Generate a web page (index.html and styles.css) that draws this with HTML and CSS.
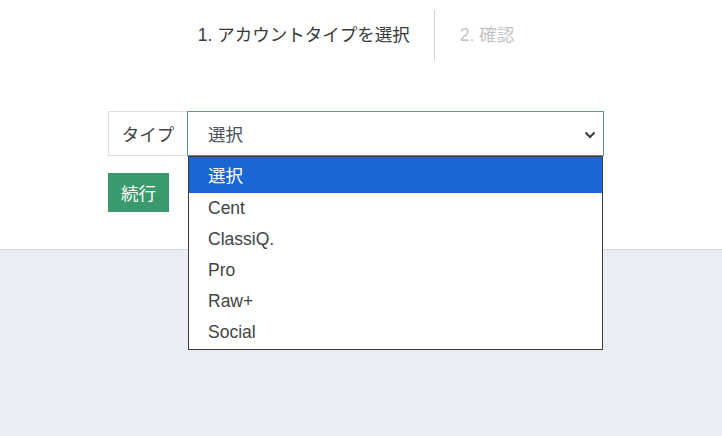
FILE: index.html
```html
<!DOCTYPE html>
<html lang="ja">
<head>
<meta charset="utf-8">
<title>アカウントタイプを選択</title>
<link rel="stylesheet" href="styles.css">
</head>
<body>
<div class="top">
  <div class="steps">
    <div class="step active">1. アカウントタイプを選択</div>
    <div class="step muted">2. 確認</div>
  </div>
  <div class="form">
    <div class="input-group">
      <div class="label">タイプ</div>
      <div class="select">
        <span>選択</span>
        <svg class="chev" width="12" height="8" viewBox="0 0 12 8"><path d="M1.5 1.5l4.5 4.5 4.5-4.5" fill="none" stroke="#3a3a3a" stroke-width="2"/></svg>
        <div class="dropdown">
          <div class="opt first selected">選択</div>
          <div class="opt">Cent</div>
          <div class="opt">ClassiQ.</div>
          <div class="opt">Pro</div>
          <div class="opt">Raw+</div>
          <div class="opt">Social</div>
        </div>
      </div>
    </div>
    <button class="btn">続行</button>
  </div>
</div>
<div class="bottom"></div>
</body>
</html>
```
FILE: styles.css
```css
html, body {
  margin: 0;
  padding: 0;
}
body {
  font-family: "Liberation Sans", "Noto Sans CJK JP", sans-serif;
  font-size: 17.5px;
  color: #444;
  background: #eaedf4;
  height: 436px;
  overflow: hidden;
}
.top {
  background: #fff;
  border-bottom: 1px solid #d6d8dc;
  box-sizing: border-box;
  height: 250px;
}
.steps {
  display: flex;
  justify-content: center;
  padding-top: 10px;
  padding-right: 10px;
}
.step {
  height: 51px;
  display: flex;
  align-items: center;
  line-height: 1;
}
.step.active {
  color: #3a3a3a;
  padding-right: 24px;
  border-right: 1px solid #d4d4d4;
}
.step.muted {
  color: #c4c4c4;
  padding-left: 25px;
}
.form {
  margin-left: 108px;
  margin-top: 50px;
}
.input-group {
  display: flex;
  height: 45px;
  width: 496px;
}
.label {
  width: 79px;
  box-sizing: border-box;
  border: 1px solid #dcdfe3;
  border-right: none;
  display: flex;
  align-items: center;
  justify-content: center;
  color: #444;
}
.select {
  position: relative;
  flex: 1;
  box-sizing: border-box;
  border: 1px solid #5f8fb8;
  display: flex;
  align-items: center;
  padding-left: 20px;
  color: #495057;
}
.chev {
  position: absolute;
  right: 7px;
  top: 19px;
}
.dropdown {
  position: absolute;
  left: 0;
  right: 0;
  top: 44px;
  background: #fff;
  border: 1px solid #3a3a3a;
  padding-bottom: 1px;
  z-index: 2;
}
.opt {
  height: 31px;
  line-height: 31px;
  padding-left: 19px;
  color: #444;
}
.opt.first {
  height: 36px;
  line-height: 38px;
}
.opt.selected {
  background: #1a66d2;
  color: #fff;
}
.btn {
  margin-top: 17px;
  width: 61px;
  height: 39px;
  background: #3a9a6d;
  color: #fff;
  border: none;
  font-family: inherit;
  font-size: 17.5px;
  padding: 0;
}
.bottom {
  height: 186px;
}
```
